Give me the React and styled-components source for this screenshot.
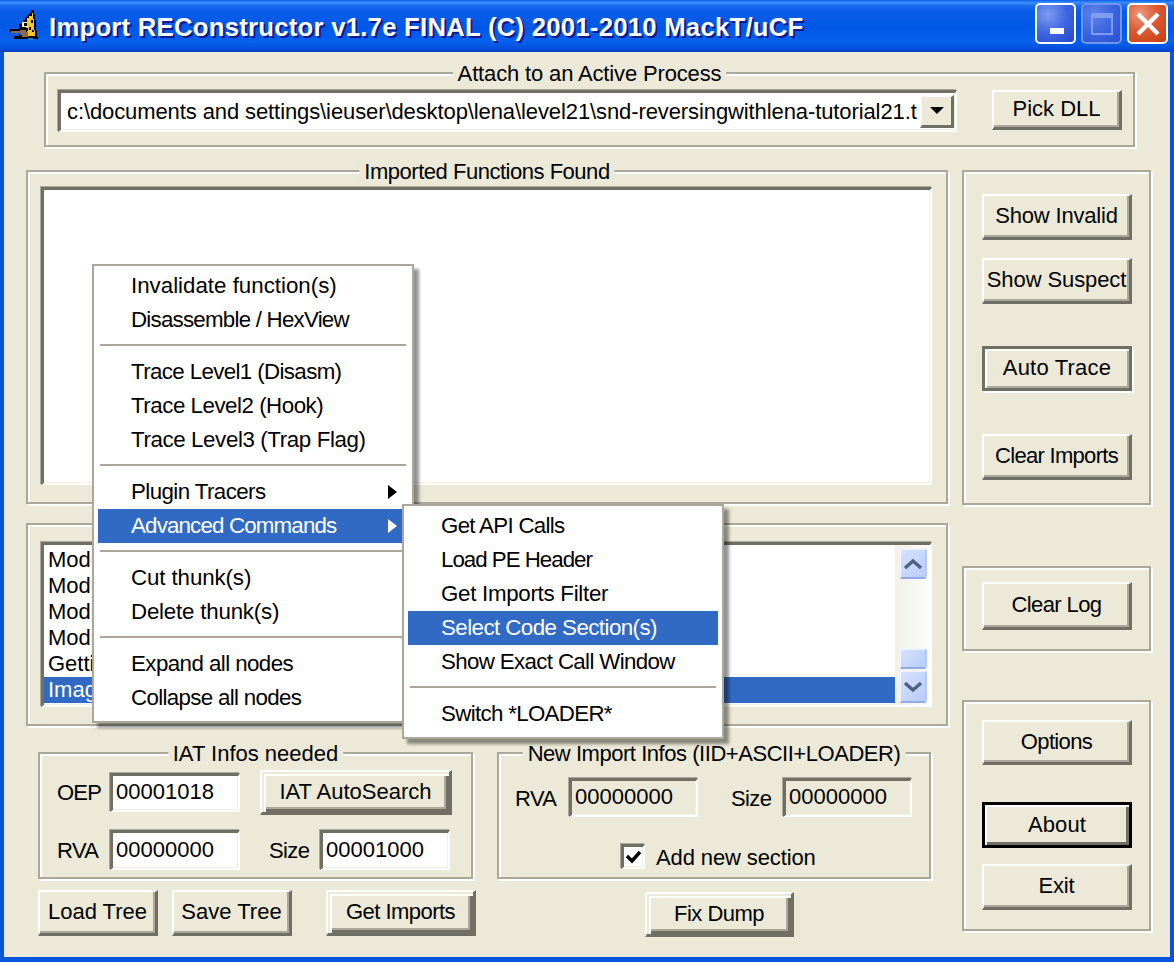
import React from "react";
import styled, { createGlobalStyle, css } from "styled-components";

const Global = createGlobalStyle`
  * { box-sizing: border-box; }
  html, body { margin: 0; padding: 0; background: #0855dd; }
  body { font-family: "Liberation Sans", Arial, sans-serif; color: #000; }
`;

const Page = styled.div`
  position: relative;
  width: 1174px;
  height: 962px;
  overflow: hidden;
  display: flex;
  flex-direction: column;
`;

const TitleBar = styled.header`
  height: 52px;
  flex: none;
  display: flex;
  align-items: center;
  padding: 0 6px 5px 10px;
  background: linear-gradient(180deg, #0a5fe8 0%, #3b8dff 5%, #1a6cf0 11%, #0a5ce8 22%, #0058e6 55%, #0561ee 80%, #0455e0 90%, #0340c8 100%);
`;

const LogoBox = styled.svg`
  flex: none;
  margin-top: 7px;
`;

const Title = styled.h1`
  margin: 0 0 0 9px;
  padding-top: 8px;
  font: 700 25.6px "Liberation Sans", Arial, sans-serif;
  color: #fff;
  letter-spacing: 0.3px;
  text-shadow: 2px 2px 0 #0f1a8c;
  white-space: nowrap;
`;

const TitleButtons = styled.div`
  margin-left: auto;
  display: flex;
  gap: 5px;
`;

const TitleButton = styled.div`
  width: 41px;
  height: 41px;
  border-radius: 5px;
  border: 2px solid ${(p) => (p.$dim ? "#6f96ee" : "#fff")};
  display: flex;
  align-items: center;
  justify-content: center;
  background: ${(p) =>
    p.$close
      ? "radial-gradient(circle at 30% 25%, #ec9a80 0%, #dc5a32 45%, #c63a10 100%)"
      : p.$dim
      ? "radial-gradient(circle at 30% 25%, #5d84ea 0%, #3a62de 55%, #2b4fd0 100%)"
      : "radial-gradient(circle at 30% 25%, #7d9cf0 0%, #3d66e2 50%, #2546cc 100%)"};
`;

const Client = styled.main`
  flex: 1;
  margin: 0 4px 5px;
  padding-top: 20px;
  background: #ece9d8;
`;

const Frame = styled.section`
  position: relative;
  flex: none;
  width: ${(p) => p.$w}px;
  height: ${(p) => p.$h}px;
  border: 2px solid #aca899;
  box-shadow: inset 2px 2px 0 #fff, 2px 2px 0 #fff;
`;

const Legend = styled.span`
  position: absolute;
  top: -13px;
  left: 50%;
  transform: translateX(-50%);
  padding: 0 5px;
  background: #ece9d8;
  white-space: nowrap;
  font-size: 22px;
  line-height: 26px;
  letter-spacing: ${(p) => p.$ls || 0}px;
`;

const AttachFrame = styled(Frame)`
  margin-left: 40px;
  display: flex;
  align-items: flex-start;
  padding: 16px 0 0 12px;
`;

const sunken = css`
  border-style: solid;
  border-width: 3px 2px 2px 3px;
  border-color: #716f64 #fff #fff #716f64;
  box-shadow: -1px -1px 0 #aca899, inset -1px -1px 0 #f1efe2;
`;

const Combo = styled.div`
  ${sunken}
  width: 899px;
  height: 42px;
  flex: none;
  display: flex;
  align-items: center;
  background: #fff;
  padding: 0 0 0 6px;
`;

const ComboText = styled.div`
  flex: 1;
  min-width: 0;
  white-space: nowrap;
  font-size: 22px;
  letter-spacing: -0.1px;
`;

const ComboArrow = styled.div`
  flex: none;
  width: 34px;
  height: 33px;
  margin: 0 1px 1px 2px;
  background: #ece9d8;
  border-style: solid;
  border-width: 2px 3px 3px 2px;
  border-color: #fff #716f64 #716f64 #fff;
  display: flex;
  align-items: center;
  justify-content: center;
  &::after {
    content: "";
    border-top: 7px solid #000;
    border-left: 7px solid transparent;
    border-right: 7px solid transparent;
  }
`;

const Button = styled.div`
  flex: none;
  width: ${(p) => p.$w}px;
  height: ${(p) => p.$h || 46}px;
  margin-top: ${(p) => p.$top || 0}px;
  margin-left: ${(p) => p.$left || 0}px;
  display: flex;
  align-items: center;
  justify-content: center;
  background: #ece9d8;
  font-size: 22px;
  letter-spacing: ${(p) => p.$ls ?? 0}px;
  white-space: nowrap;
  padding-bottom: 1px;
  border-style: solid;
  border-width: 2px 3px 3px 2px;
  border-color: #fff #716f64 #716f64 #fff;
  box-shadow: inset -2px -2px 0 #aca899;
  ${(p) =>
    p.$kind === "default" &&
    css`
      border-color: #fff #716f64 #716f64 #fff;
      box-shadow: inset 2px 2px 0 #ece9d8, inset 4px 4px 0 #fff, inset -3px -3px 0 #716f64, inset -5px -5px 0 #aca899;
    `}
  ${(p) =>
    p.$kind === "focus" &&
    css`
      border-width: 3px;
      border-color: #716f64;
      box-shadow: 2px 2px 0 #fff, inset 2px 2px 0 #fff, inset -2px -2px 0 #aca899;
    `}
  ${(p) =>
    p.$kind === "about" &&
    css`
      border-width: 3px;
      border-color: #000;
      box-shadow: inset 2px 2px 0 #fff, inset -3px -3px 0 #716f64;
    `}
`;

const MainArea = styled.div`
  display: flex;
  gap: 14px;
  margin-top: 23px;
  padding-left: 22px;
`;

const LeftColumn = styled.div`
  flex: none;
  width: 922px;
  display: flex;
  flex-direction: column;
`;

const ListFrame = styled(Frame)`
  margin-top: ${(p) => p.$top || 0}px;
  padding: ${(p) => p.$pad}px 0 0 13px;
`;

const ListBox = styled.div`
  ${sunken}
  width: 891px;
  height: ${(p) => p.$h}px;
  background: #fff;
  display: flex;
`;

const LogRows = styled.div`
  flex: 1;
  min-width: 0;
  padding-top: 2px;
`;

const LogRow = styled.div`
  height: 26px;
  padding-left: 4px;
  font-size: 22px;
  line-height: 26px;
  background: ${(p) => (p.$selected ? "#316ac5" : "transparent")};
  color: ${(p) => (p.$selected ? "#fff" : "#000")};
`;

const Scrollbar = styled.div`
  flex: none;
  width: 35px;
  padding: 3px 3px 2px 4px;
  display: flex;
  flex-direction: column;
  background: linear-gradient(90deg, #f1efe6, #fdfdfa);
`;

const ScrollButton = styled.div`
  flex: none;
  height: ${(p) => p.$h}px;
  margin-top: ${(p) => p.$top || 0}px;
  border-radius: 3px;
  border: 2px solid #eef3fe;
  border-right-color: #b6c8ee;
  border-bottom-color: #8fabe2;
  background: linear-gradient(135deg, #d6e2fd, #b9ccf9);
  display: flex;
  align-items: center;
  justify-content: center;
`;

const BottomFrames = styled.div`
  display: flex;
  gap: 24px;
  margin: 26px 0 0 12px;
`;

const Row = styled.div`
  display: flex;
  align-items: center;
  height: ${(p) => p.$h}px;
  margin-top: ${(p) => p.$top}px;
  padding-left: ${(p) => p.$pad}px;
`;

const Label = styled.label`
  flex: none;
  width: ${(p) => p.$w}px;
  margin-left: ${(p) => p.$left || 0}px;
  margin-top: ${(p) => p.$drop || 0}px;
  font-size: 22px;
  letter-spacing: ${(p) => p.$ls ?? 0}px;
`;

const Field = styled.div`
  ${sunken}
  flex: none;
  width: ${(p) => p.$w}px;
  height: ${(p) => p.$h || 39}px;
  padding: 0 0 2px 3px;
  display: flex;
  align-items: center;
  font-size: 22px;
  background: ${(p) => (p.$disabled ? "#ece9d8" : "#fff")};
`;

const Check = styled.div`
  ${sunken}
  width: 24px;
  height: 25px;
  flex: none;
  background: #fff;
  display: flex;
  align-items: center;
  justify-content: center;
`;

const ActionRow = styled.div`
  display: flex;
  align-items: flex-start;
  margin: 11px 0 0 12px;
`;

const RightColumn = styled.aside`
  flex: none;
  width: 189px;
  display: flex;
  flex-direction: column;
`;

const ButtonFrame = styled(Frame)`
  width: 189px;
  margin-top: ${(p) => p.$top || 0}px;
  padding: ${(p) => p.$pad}px 0 0 18px;
  display: flex;
  flex-direction: column;
`;

const Menu = styled.div`
  position: absolute;
  left: ${(p) => p.$x}px;
  top: ${(p) => p.$y}px;
  width: 322px;
  padding: 3px 4px 6px;
  background: #fff;
  border: 2px solid #aca899;
  box-shadow: 5px 5px 3px rgba(0, 0, 0, 0.42);
  font-size: 22.3px;
`;

const MenuItem = styled.div`
  height: 34px;
  display: flex;
  align-items: center;
  padding: 0 11px 0 33px;
  white-space: nowrap;
  letter-spacing: ${(p) => p.$ls}px;
  background: ${(p) => (p.$on ? "#316ac5" : "transparent")};
  color: ${(p) => (p.$on ? "#fff" : "#000")};
`;

const MenuArrow = styled.span`
  margin-left: auto;
  border-left: 9px solid ${(p) => (p.$on ? "#fff" : "#000")};
  border-top: 7px solid transparent;
  border-bottom: 7px solid transparent;
`;

const MenuSeparator = styled.div`
  height: 2px;
  margin: 7px 2px 9px;
  background: #aca899;
`;

const Logo = () => (
  <LogoBox width="30" height="34" viewBox="0 0 30 34" aria-hidden="true" shapeRendering="crispEdges">
    <path d="M21 0h3v4h1v6h1v10h1v6h1v3H4v-3h5v-4H0v-3h9v-5h2v-2h2v-2h2V7h2V5h2V3h2z" fill="#000" />
    <path d="M22 3h1v6h1v11h1v6h-7v-3h-1v-2h1v-3h-2v-3h-2v-3h3V8h2V6h3z" fill="#f3c51f" />
    <path d="M12 12h5v5h-5z" fill="#f4f1e4" />
    <path d="M14 13h3v3h-3z" fill="#000" />
    <path d="M21 10h2v3h-2zM19 17h2v3h-2zM22 20h2v2h-2z" fill="#000" />
    <path d="M1 21h9v-1h6v2h2v5h-6v-2h-2v-2H1z" fill="#8a6a52" />
    <path d="M18 28h5v2h-5z" fill="#1c78d8" />
  </LogoBox>
);

const Chevron = ({ up }) => (
  <svg width="20" height="12" viewBox="0 0 20 12" aria-hidden="true">
    <path d={up ? "M2 10 L10 3 L18 10" : "M2 2 L10 9 L18 2"} fill="none" stroke="#4d6185" strokeWidth="3.4" />
  </svg>
);

const menuGroups = [
  [["Invalidate function(s)", 0], ["Disassemble / HexView", -0.76]],
  [["Trace Level1 (Disasm)", -0.62], ["Trace Level2 (Hook)", -0.47], ["Trace Level3 (Trap Flag)", -0.38]],
  [["Plugin Tracers", -0.57], ["Advanced Commands", -0.82]],
  [["Cut thunk(s)", -0.1], ["Delete thunk(s)", -0.2]],
  [["Expand all nodes", -0.56], ["Collapse all nodes", -0.67]],
];

const subGroups = [
  [["Get API Calls", -0.7], ["Load PE Header", -1], ["Get Imports Filter", -0.28], ["Select Code Section(s)", -0.55], ["Show Exact Call Window", -0.64]],
  [["Switch *LOADER*", -0.67]],
];

const hasArrow = (t) => t === "Plugin Tracers" || t === "Advanced Commands";

const renderMenu = (groups, active) =>
  groups.map((group, i) => (
    <React.Fragment key={i}>
      {i > 0 && <MenuSeparator />}
      {group.map(([t, ls]) => (
        <MenuItem key={t} $on={t === active} $ls={ls}>
          {t}
          {hasArrow(t) && <MenuArrow $on={t === active} />}
        </MenuItem>
      ))}
    </React.Fragment>
  ));

export default function App() {
  return (
    <Page>
      <Global />
      <TitleBar>
        <Logo />
        <Title>Import REConstructor v1.7e FINAL (C) 2001-2010 MackT/uCF</Title>
        <TitleButtons>
          <TitleButton>
            <svg width="24" height="24" viewBox="0 0 24 24" aria-hidden="true">
              <rect x="6" y="16" width="14" height="6" fill="#fff" />
            </svg>
          </TitleButton>
          <TitleButton $dim>
            <svg width="24" height="24" viewBox="0 0 24 24" aria-hidden="true">
              <path d="M2 2h20v20H2z M2 3.5h20 M2 5h20" fill="none" stroke="#7f9df0" strokeWidth="2" />
            </svg>
          </TitleButton>
          <TitleButton $close>
            <svg width="26" height="26" viewBox="0 0 26 26" aria-hidden="true">
              <path d="M3 3 L23 23 M23 3 L3 23" stroke="#fff" strokeWidth="4.4" />
            </svg>
          </TitleButton>
        </TitleButtons>
      </TitleBar>

      <Client>
        <AttachFrame $w={1091} $h={75}>
          <Legend $ls={-0.15}>Attach to an Active Process</Legend>
          <Combo>
            <ComboText>c:\documents and settings\ieuser\desktop\lena\level21\snd-reversingwithlena-tutorial21.t</ComboText>
            <ComboArrow />
          </Combo>
          <Button $w={130} $h={40} $left={35}>Pick DLL</Button>
        </AttachFrame>

        <MainArea>
          <LeftColumn>
            <ListFrame $w={922} $h={334} $pad={15}>
              <Legend $ls={-0.48}>Imported Functions Found</Legend>
              <ListBox $h={298} />
            </ListFrame>
            <ListFrame $w={922} $h={203} $pad={17} $top={19}>
              <ListBox $h={165}>
                <LogRows>
                  <LogRow>Module</LogRow>
                  <LogRow>Module</LogRow>
                  <LogRow>Module</LogRow>
                  <LogRow>Module</LogRow>
                  <LogRow>Getting</LogRow>
                  <LogRow $selected>Image</LogRow>
                </LogRows>
                <Scrollbar>
                  <ScrollButton $h={31}><Chevron up /></ScrollButton>
                  <ScrollButton $h={21} $top={69} />
                  <ScrollButton $h={33} $top={1}><Chevron /></ScrollButton>
                </Scrollbar>
              </ListBox>
            </ListFrame>

            <BottomFrames>
              <Frame $w={435} $h={127}>
                <Legend>IAT Infos needed</Legend>
                <Row $h={45} $top={16} $pad={17}>
                  <Label $w={53} $ls={-0.8}>OEP</Label>
                  <Field $w={130}>00001018</Field>
                  <Button $w={192} $h={45} $left={20} $kind="default">IAT AutoSearch</Button>
                </Row>
                <Row $h={40} $top={15} $pad={17}>
                  <Label $w={53} $drop={2} $ls={-0.6}>RVA</Label>
                  <Field $w={130} $h={40}>00000000</Field>
                  <Label $w={51} $left={29} $drop={2} $ls={-0.6}>Size</Label>
                  <Field $w={130} $h={40}>00001000</Field>
                </Row>
              </Frame>
              <Frame $w={434} $h={127}>
                <Legend $ls={-0.46}>New Import Infos (IID+ASCII+LOADER)</Legend>
                <Row $h={39} $top={24} $pad={16}>
                  <Label $w={54} $drop={2} $ls={-0.6}>RVA</Label>
                  <Field $w={129} $disabled>00000000</Field>
                  <Label $w={52} $left={33} $drop={2} $ls={-0.6}>Size</Label>
                  <Field $w={129} $disabled>00000000</Field>
                </Row>
                <Row $h={25} $top={27} $pad={122}>
                  <Check>
                    <svg width="17" height="16" viewBox="0 0 17 16" aria-hidden="true">
                      <path d="M2 7 L7 12 L15 3" fill="none" stroke="#000" strokeWidth="3.4" />
                    </svg>
                  </Check>
                  <Label $w={170} $left={11} $drop={2} $ls={-0.12}>Add new section</Label>
                </Row>
              </Frame>
            </BottomFrames>

            <ActionRow>
              <Button $w={120}>Load Tree</Button>
              <Button $w={120} $left={14}>Save Tree</Button>
              <Button $w={150} $left={34} $kind="default" $ls={-0.55}>Get Imports</Button>
              <Button $w={149} $h={45} $left={169} $top={2} $kind="default" $ls={-0.5}>Fix Dump</Button>
            </ActionRow>
          </LeftColumn>

          <RightColumn>
            <ButtonFrame $h={335} $pad={22}>
              <Button $w={150} $ls={-0.2}>Show Invalid</Button>
              <Button $w={150} $top={18} $ls={-0.1}>Show Suspect</Button>
              <Button $w={150} $h={45} $top={42} $kind="focus" $ls={0.2}>Auto Trace</Button>
              <Button $w={150} $top={43} $ls={-0.7}>Clear Imports</Button>
            </ButtonFrame>
            <ButtonFrame $h={85} $pad={14} $top={61}>
              <Button $w={150} $h={48} $ls={-0.6}>Clear Log</Button>
            </ButtonFrame>
            <ButtonFrame $h={231} $pad={18} $top={49}>
              <Button $w={150} $h={45} $ls={-0.65}>Options</Button>
              <Button $w={150} $top={37} $kind="about" $ls={0.1}>About</Button>
              <Button $w={150} $top={16} $ls={-0.2}>Exit</Button>
            </ButtonFrame>
          </RightColumn>
        </MainArea>
      </Client>

      <Menu $x={92} $y={264}>{renderMenu(menuGroups, "Advanced Commands")}</Menu>
      <Menu $x={402} $y={504}>{renderMenu(subGroups, "Select Code Section(s)")}</Menu>
    </Page>
  );
}
